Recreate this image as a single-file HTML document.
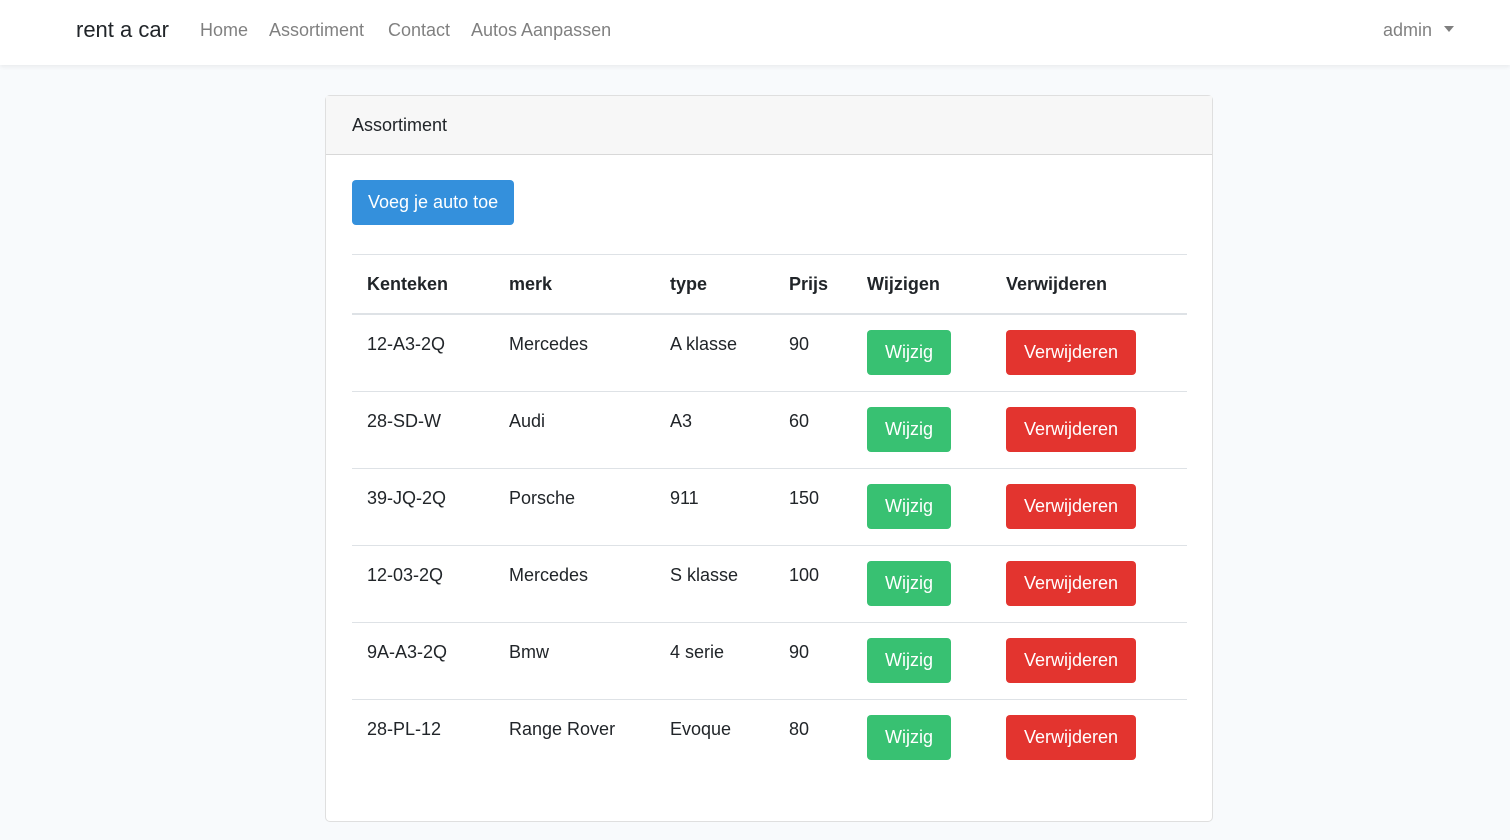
<!DOCTYPE html>
<html><head><meta charset="utf-8"><style>
*{box-sizing:border-box;margin:0;padding:0}
body{width:1510px;height:840px;background:#f8fafc;font-family:"Liberation Sans",sans-serif;color:#212529;font-size:18px;overflow:hidden}
.nav{height:65px;background:#fff;box-shadow:0 2px 4px rgba(0,0,0,.06);position:relative}
.brand{position:absolute;left:76px;top:17px;font-size:22px;color:#212529}
.links{position:absolute;top:20px;font-size:18px;color:rgba(0,0,0,.5)}
.admin{position:absolute;left:1383px;top:20px;color:rgba(0,0,0,.5)}
.admin:after{content:"";display:inline-block;margin-left:12px;vertical-align:4px;border-top:6px solid rgba(0,0,0,.5);border-left:5px solid transparent;border-right:5px solid transparent}
.card{position:absolute;left:325px;top:95px;width:888px;height:727px;background:#fff;border:1px solid rgba(0,0,0,.125);border-radius:5px}
.ch{height:59px;background:#f7f7f7;border-bottom:1px solid rgba(0,0,0,.125);padding:19px 26px;font-size:18px}
.btn{display:inline-block;color:#fff;border-radius:4px;height:45px;line-height:45px;padding:0 18px;font-size:18px}
.blue{background:#3490dc;position:absolute;left:26px;top:84px;padding:0 16px}
table{position:absolute;left:26px;top:158px;width:835px;border-collapse:collapse}
td,th{text-align:left;padding:0 0 0 15px;vertical-align:top;border-top:1px solid #dee2e6}
th{height:58px;line-height:58px;border-bottom:2px solid #dee2e6;font-weight:bold}
td{height:77px;padding-top:19px}
td.b{padding-top:15px}
.g{background:#38c172}.r{background:#e3342f}
</style></head><body>
<div class="nav"><div class="brand">rent a car</div>
<span class="links" style="left:200px">Home</span><span class="links" style="left:269px">Assortiment</span><span class="links" style="left:388px">Contact</span><span class="links" style="left:471px">Autos Aanpassen</span>
<div class="admin">admin</div></div>
<div class="card"><div class="ch">Assortiment</div>
<span class="btn blue">Voeg je auto toe</span>
<table>
<colgroup><col style="width:142px"><col style="width:161px"><col style="width:119px"><col style="width:78px"><col style="width:139px"><col></colgroup>
<tr><th>Kenteken</th><th>merk</th><th>type</th><th>Prijs</th><th>Wijzigen</th><th>Verwijderen</th></tr>
<tr><td>12-A3-2Q</td><td>Mercedes</td><td>A klasse</td><td>90</td><td class="b"><span class="btn g">Wijzig</span></td><td class="b"><span class="btn r">Verwijderen</span></td></tr>
<tr><td>28-SD-W</td><td>Audi</td><td>A3</td><td>60</td><td class="b"><span class="btn g">Wijzig</span></td><td class="b"><span class="btn r">Verwijderen</span></td></tr>
<tr><td>39-JQ-2Q</td><td>Porsche</td><td>911</td><td>150</td><td class="b"><span class="btn g">Wijzig</span></td><td class="b"><span class="btn r">Verwijderen</span></td></tr>
<tr><td>12-03-2Q</td><td>Mercedes</td><td>S klasse</td><td>100</td><td class="b"><span class="btn g">Wijzig</span></td><td class="b"><span class="btn r">Verwijderen</span></td></tr>
<tr><td>9A-A3-2Q</td><td>Bmw</td><td>4 serie</td><td>90</td><td class="b"><span class="btn g">Wijzig</span></td><td class="b"><span class="btn r">Verwijderen</span></td></tr>
<tr><td>28-PL-12</td><td>Range Rover</td><td>Evoque</td><td>80</td><td class="b"><span class="btn g">Wijzig</span></td><td class="b"><span class="btn r">Verwijderen</span></td></tr>
</table></div>
</body></html>
